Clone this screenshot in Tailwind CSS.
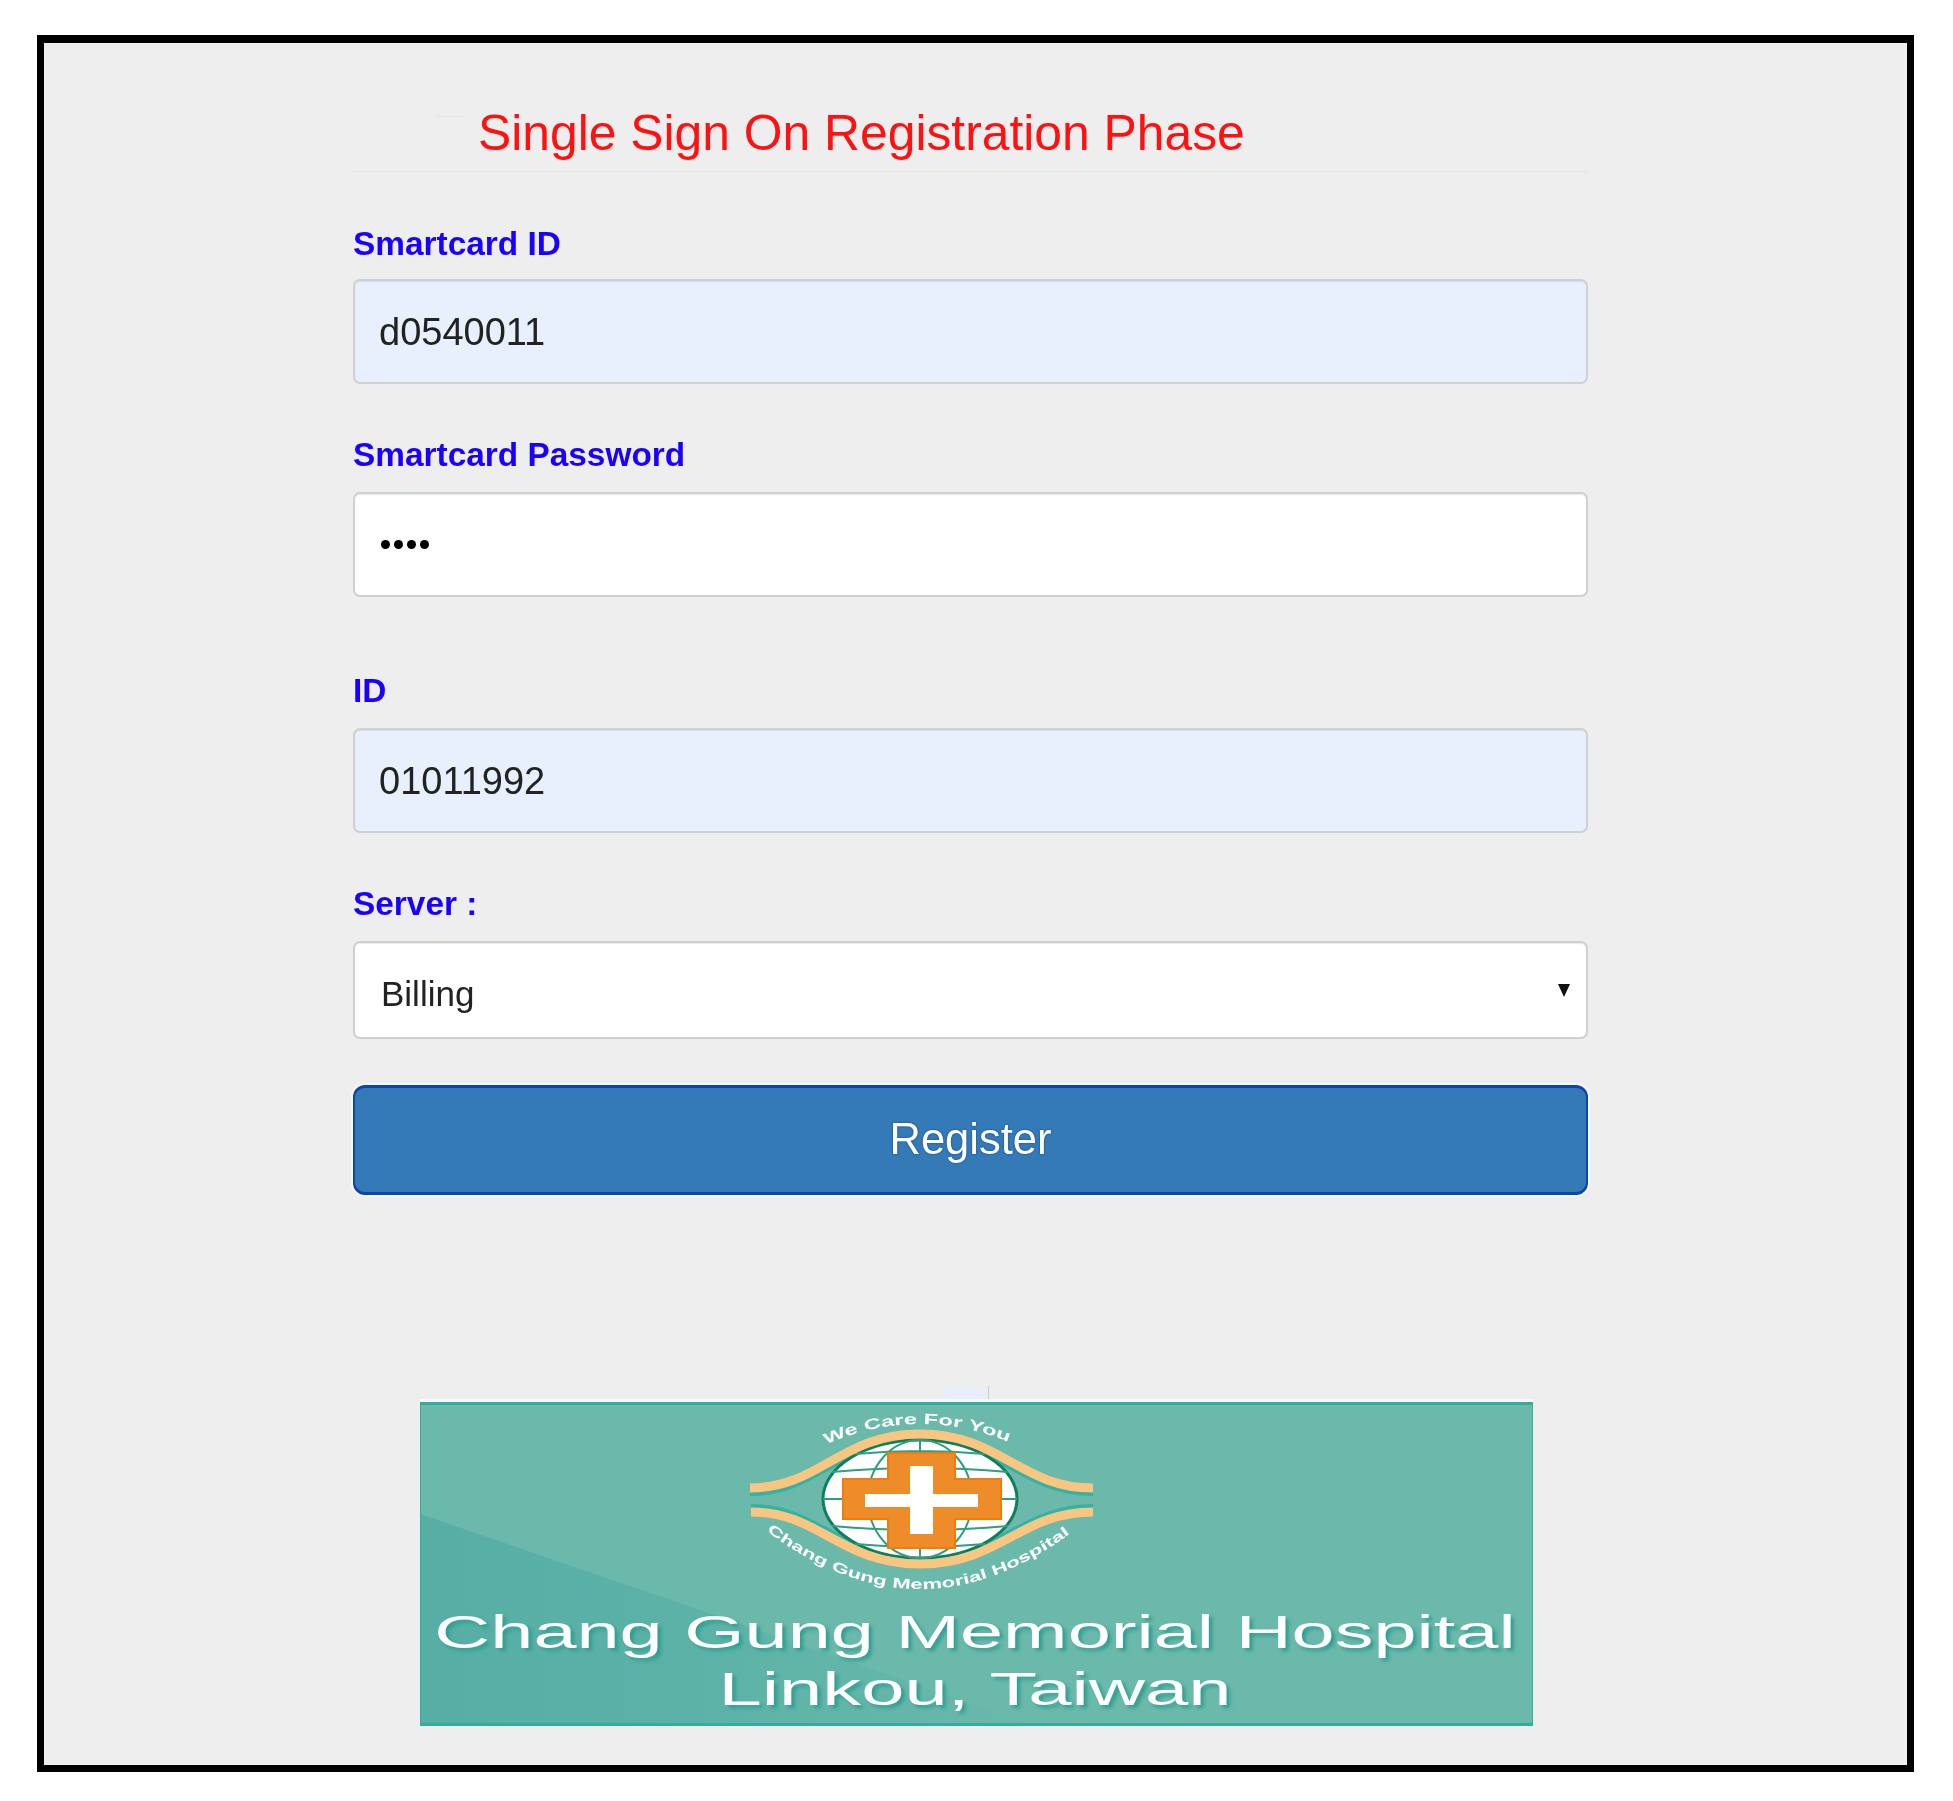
<!DOCTYPE html>
<html>
<head>
<meta charset="utf-8">
<script src="https://cdn.jsdelivr.net/npm/@tailwindcss/browser@4"></script>
</head>
<body class="bg-white font-['Liberation_Sans',Arial,sans-serif]">
<div class="w-[1953px] h-[1801px] pt-[35px] pl-[37px]">
  <div class="relative w-[1877px] h-[1737px] border-[7px] border-t-[8px] border-black bg-[#eeeeee] pl-[309px]">
    <div class="absolute left-[392px] top-[73px] w-[28px] h-[1px] bg-[#e6e6e6]"></div>
    <div class="w-[1235px] blur-[0.6px]">
      <div class="h-[129px] border-b border-[#e6e6e6] pl-[125px] pt-[60px]">
        <h1 class="text-[49.8px] leading-[60px] text-[#ff1111] whitespace-nowrap">Single Sign On Registration Phase</h1>
      </div>

      <div class="mt-[52px] h-[40px] mb-[15px] text-[33.4px] leading-[40px] font-bold text-[#1a00ff]">Smartcard ID</div>
      <div class="h-[105px] rounded-[7px] border-2 border-[#d0d0d2] bg-[#e8f0fe] pl-[24px] flex items-center text-[38px] text-[#222222] shadow-[inset_0_1px_1px_rgba(0,0,0,0.08)]"><span class="pt-[2px]">d0540011</span></div>

      <div class="mt-[51px] h-[40px] mb-[17px] text-[33.4px] leading-[40px] font-bold text-[#1a00ff]">Smartcard Password</div>
      <div class="h-[105px] rounded-[7px] border-2 border-[#d0d0d2] bg-white pl-[26px] flex items-center gap-[4px] shadow-[inset_0_1px_1px_rgba(0,0,0,0.08)]">
        <span class="w-[9px] h-[9px] rounded-full bg-black"></span><span class="w-[9px] h-[9px] rounded-full bg-black"></span><span class="w-[9px] h-[9px] rounded-full bg-black"></span><span class="w-[9px] h-[9px] rounded-full bg-black"></span>
      </div>

      <div class="mt-[74px] h-[40px] mb-[17px] text-[33.4px] leading-[40px] font-bold text-[#1a00ff]">ID</div>
      <div class="h-[105px] rounded-[7px] border-2 border-[#d0d0d2] bg-[#e8f0fe] pl-[24px] flex items-center text-[38px] text-[#222222] shadow-[inset_0_1px_1px_rgba(0,0,0,0.08)]"><span class="pt-[2px]">01011992</span></div>

      <div class="mt-[51px] h-[40px] mb-[17px] text-[33.4px] leading-[40px] font-bold text-[#1a00ff]">Server :</div>
      <div class="h-[98px] rounded-[7px] border-2 border-[#d0d0d2] bg-white pl-[26px] pr-[16px] flex items-center justify-between text-[35px] text-[#222222] shadow-[inset_0_1px_1px_rgba(0,0,0,0.08)]">
        <span class="pt-[8px]">Billing</span>
        <svg class="w-[12px] h-[13px]" viewBox="0 0 12 13"><path d="M0 0H12L6 13Z" fill="#111111"/></svg>
      </div>

      <div class="mt-[46px] h-[110px] rounded-[12px] border-2 border-y-[3px] border-[#0b46ac] bg-[#337ab7] flex items-center justify-center text-[43.5px] text-white shadow-[0_0_0_2px_#f8f8f8] [text-shadow:0_0_2px_#123a8f]">Register</div>

      <div class="relative ml-[67px] mt-[207px] w-[1113px] h-[324px]">
        <div class="absolute left-[523px] top-[-13px] w-[45px] h-[13px] bg-[#e8eefc]"></div>
        <div class="absolute left-[568px] top-[-16px] w-[1px] h-[16px] bg-[#c9c9d2]"></div>
        <div class="absolute left-0 top-[-3px] w-[1113px] h-[3px] bg-[#f8f8f8]"></div>
        <div class="relative w-[1113px] h-[324px] border-[1px] border-y-[3px] border-[#34ac9e] bg-[#6bb9ab] overflow-hidden text-white text-[46px] leading-[57px] text-center [text-shadow:2px_3px_3px_#2f9f92]">
          <svg class="absolute left-[-1px] top-[-3px] w-[1113px] h-[324px]" viewBox="0 0 1113 324">
            <defs>
              <linearGradient id="fade" x1="0" y1="0" x2="1" y2="0">
                <stop offset="0" stop-color="#56aea5"/>
                <stop offset="0.45" stop-color="#5cb2a7"/>
                <stop offset="1" stop-color="#6bb9ab"/>
              </linearGradient>
              <path id="arc-top" d="M402 44Q500 0 598 44"/>
              <path id="arc-bottom" d="M340 124Q500 250 660 124"/>
            </defs>
            <polygon points="0,112 618,324 0,324" fill="url(#fade)"/>
            <path d="M330 92C400 92 420 38 500 38C580 38 600 92 673 92" fill="none" stroke="#35b2a6" stroke-width="4"/>
            <path d="M331 104C400 104 420 156 500 156C580 156 600 104 673 104" fill="none" stroke="#35b2a6" stroke-width="4"/>
            <ellipse cx="500" cy="97" rx="97" ry="59" fill="#ffffff" stroke="#0c7f5d" stroke-width="3"/>
            <g fill="none" stroke="#2f9f80" stroke-width="2">
              <ellipse cx="500" cy="97" rx="52" ry="59"/>
              <path d="M500 38V156M403 97H597M412 70Q500 62 588 70M412 124Q500 132 588 124M435 52Q500 46 565 52M435 142Q500 148 565 142"/>
            </g>
            <path d="M330 86C400 86 420 32 500 32C580 32 600 86 673 86" fill="none" stroke="#f9c681" stroke-width="9"/>
            <path d="M331 110C400 110 420 162 500 162C580 162 600 110 673 110" fill="none" stroke="#f9c681" stroke-width="9"/>
            <path d="M468 51H535V77H581V117H535V146H468V117H423V77H468Z" fill="#ee8c2a" stroke="#f07c0c" stroke-width="2"/>
            <path d="M490 64H513V92H558V105H513V132H490V105H445V92H490Z" fill="#ffffff"/>
            <text fill="#ffffff" font-size="15" font-weight="700" style="text-shadow:none"><textPath href="#arc-top" startOffset="4" textLength="188" lengthAdjust="spacingAndGlyphs">We Care For You</textPath></text>
            <text fill="#ffffff" font-size="14" font-weight="700" style="text-shadow:none"><textPath href="#arc-bottom" startOffset="8" textLength="330" lengthAdjust="spacingAndGlyphs">Chang Gung Memorial Hospital</textPath></text>
          </svg>
          <div class="relative pt-[199px] pr-[3px]">
            <div class="scale-x-[1.685] whitespace-nowrap">Chang Gung Memorial Hospital</div>
            <div class="scale-x-[1.69] whitespace-nowrap">Linkou, Taiwan</div>
          </div>
        </div>
      </div>
    </div>
  </div>
</div>
</body>
</html>
